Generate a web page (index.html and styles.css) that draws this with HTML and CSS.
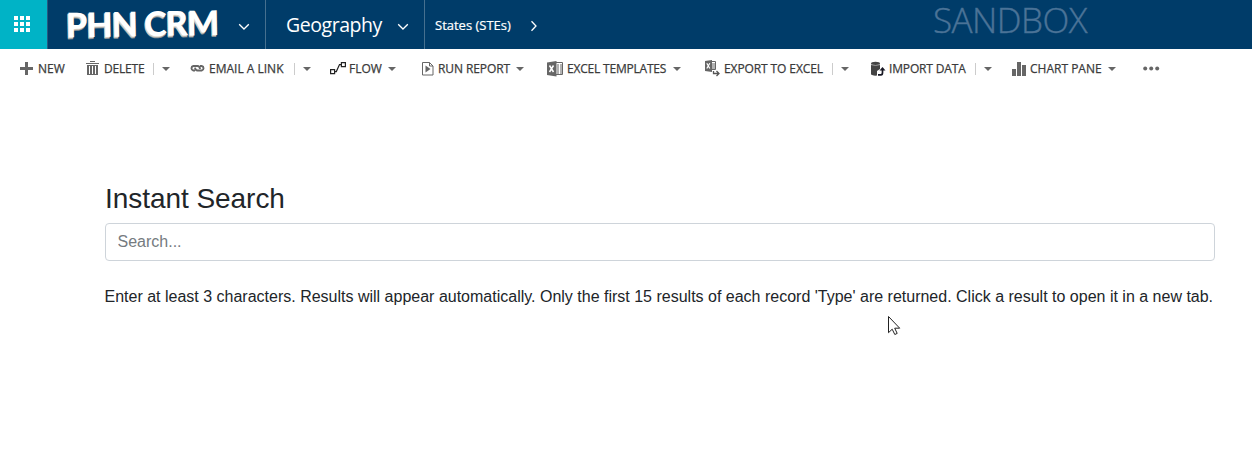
FILE: index.html
```html
<!DOCTYPE html>
<html lang="en">
<head>
<meta charset="utf-8">
<title>PHN CRM</title>
<link rel="stylesheet" href="styles.css">
</head>
<body>
<header class="nav">
  <div class="waffle"><svg width="16" height="16" fill="#fff"><path d="M0 0h4v4H0zM6 0h4v4H6zM12 0h4v4h-4zM0 6h4v4H0zM6 6h4v4H6zM12 6h4v4h-4zM0 12h4v4H0zM6 12h4v4H6zM12 12h4v4h-4z"/></svg></div>
  <div class="brand"><span class="brand-text">PHN CRM</span><svg class="chev" width="12" height="8"><path d="M1.2 1.2L6 6L10.8 1.2"/></svg></div>
  <div class="area"><span class="area-text">Geography</span><svg class="chev" width="12" height="8"><path d="M1.2 1.2L6 6L10.8 1.2"/></svg></div>
  <div class="entity"><span class="entity-text">States (STEs)</span><svg class="chev" width="8" height="12"><path d="M1.5 1.2L6 6L1.5 10.8"/></svg></div>
  <div class="env"><span class="env-text">SANDBOX</span></div>
</header>
<nav class="commands">
  <div class="cmd new"><svg class="icon" width="18" height="16"><path d="M5 1h3v5h5v3H8v5H5V9H0V6h5z"/></svg><span class="label">NEW</span></div>
  <div class="cmd delete"><svg class="icon" width="18" height="16"><path d="M4 0h5v1H4zM0 2h13v1H0zM1 4h11v10H1z"/><path d="M3.500 5v8M6.500 5v8M9.500 5v8" stroke="#fff"/></svg><span class="label">DELETE</span><i class="bar"></i><i class="caret"></i></div>
  <div class="cmd email"><svg class="icon" width="19" height="16"><g fill="none" stroke="#666" stroke-width="1.900"><path d="M5 9.500H3.300A2.300 2.300 0 0 1 3.300 5h4.200q2.300 0 2.500 3"/><path d="M10 5H11.700A2.300 2.300 0 0 1 11.700 9.500H7.500Q5.300 9.500 5 6.700"/></g></svg><span class="label">EMAIL A LINK</span><i class="bar"></i><i class="caret"></i></div>
  <div class="cmd flow"><svg class="icon" width="19" height="16"><g fill="none" stroke="#222" stroke-width="1.200"><path d="M.6 8.600h4v4h-4zM11.400 1.600h4v4h-4zM5 10.600h1.300L9.500 3.600h2"/></g></svg><span class="label">FLOW</span><i class="caret"></i></div>
  <div class="cmd report"><svg class="icon" width="16" height="16"><path fill="none" stroke="#666" d="M.5 1.500h7l3.500 3.500v9H.5zM7.500 1.500V5H11"/><path d="M3.500 4.500l5 3.500l-5 3.500z"/></svg><span class="label">RUN REPORT</span><i class="caret"></i></div>
  <div class="cmd templates"><svg class="icon" width="20" height="16"><path fill="none" stroke="#666" d="M9 1.500h6.500v12H9"/><path fill="none" stroke="#666" stroke-dasharray="2 1" d="M10 4h5M10 6h5M10 8h5M10 10h5M10 12h5"/><path d="M0 1.500L9.500 0v15.500L0 14z"/><path stroke="#fff" stroke-width="1.500" d="M2.500 4.500l4 6.500M6.500 4.500l-4 6.500"/></svg><span class="label">EXCEL TEMPLATES</span><i class="caret"></i></div>
  <div class="cmd export"><svg class="icon" width="19" height="17"><path fill="none" stroke="#666" d="M6 1.500h4.500v8H6M7 4h3M7 6h3M7 8h3"/><path fill="none" stroke="#555" stroke-width="1.300" d="M8.500 11v2.500h5M11.500 11l2.500 2.500l-2.500 2.500"/><path d="M0 1l7-1v12L0 11z"/><path stroke="#fff" stroke-width="1.200" d="M1.800 3.300l3 5.200M4.800 3.300L1.800 8.500"/></svg><span class="label">EXPORT TO EXCEL</span><i class="bar"></i><i class="caret"></i></div>
  <div class="cmd import"><svg class="icon" width="19" height="16"><path fill="#444" d="M1 3.500h9V8L7 10v4.500Q3 15 1 13.500z"/><ellipse cx="5.500" cy="2.500" rx="4.500" ry="1.700" fill="#444"/><path stroke="#bbb" fill="none" stroke-width=".7" d="M1 3.600q4.500 1.800 9 0"/><path fill="none" stroke="#181825" stroke-width="1.700" d="M8 13.800h3q1.500 0 1.500-2V8"/><path fill="#181825" d="M9.500 9.500L12.500 6l3 3.500z"/></svg><span class="label">IMPORT DATA</span><i class="bar"></i><i class="caret"></i></div>
  <div class="cmd chart"><svg class="icon" width="18" height="16"><path d="M0 8h4v7H0zM5 1h4v14H5zM10 4h4v11h-4z"/></svg><span class="label">CHART PANE</span><i class="caret"></i></div>
  <svg class="more" width="17" height="5"><circle cx="2.200" cy="2.500" r="2"/><circle cx="8.200" cy="2.500" r="2"/><circle cx="14.200" cy="2.500" r="2"/></svg>
</nav>
<main class="search">
  <h1 class="title">Instant Search</h1>
  <input class="field" type="text" placeholder="Search...">
  <p class="hint">Enter at least 3 characters. Results will appear automatically. Only the first 15 results of each record 'Type' are returned. Click a result to open it in a new tab.</p>
</main>
<svg class="pointer" width="13" height="20"><path d="M.5.5v16.200l3.700-3.500l2.600 5.300l2.400-1.100l-2.500-5.200h5z" fill="#fff" stroke="#222"/></svg>
</body>
</html>
```
FILE: styles.css
```css
* { box-sizing: border-box; }
body { margin: 0; height: 459px; overflow: hidden; background: #fff; font-family: "Open Sans", "Noto Sans", sans-serif; }
.nav { display: flex; height: 49px; background: #003c69; color: #fff; white-space: nowrap; }
.waffle { width: 47px; padding: 16px 0 0 14px; background: #00b3c6; flex: none; }
.waffle svg, .icon, .more, .chev { display: block; flex: none; }
.brand { display: flex; width: 219px; padding-left: 18px; border-left: 1px solid #275a80; border-right: 1px solid #46708f; flex: none; }
.brand-text { width: 172px; font: 900 34px/45px Lato, sans-serif; letter-spacing: -.9px; text-shadow: -1px 1px 0 #d8d0c4, -1px 2px 0 #8b9297; transform: rotate(-1deg); }
.chev { fill: none; stroke: #fff; stroke-width: 1.300; margin-top: 23px; }
.area { display: flex; width: 159px; padding-left: 20px; border-right: 1px solid #46708f; flex: none; }
.area-text { width: 111px; font-size: 19.500px; line-height: 49px; letter-spacing: -.45px; }
.entity { display: flex; width: 508px; padding-left: 10px; flex: none; }
.entity-text { width: 95px; font-size: 13px; line-height: 50px; -webkit-text-stroke: .2px #fff; }
.entity .chev { margin-top: 20px; }
.env-text { display: block; font-size: 35px; font-weight: 300; line-height: 40px; color: #4b7397; letter-spacing: -.5px; -webkit-text-stroke: .4px #4b7397; }
.commands { display: flex; height: 39px; padding-left: 20px; color: #3b3b3b; font-size: 12px; -webkit-text-stroke: .25px #3b3b3b; }
.cmd { display: flex; height: 39px; align-items: center; flex: none; white-space: nowrap; }
.icon { fill: #666; }
.label { line-height: 39px; flex: none; }
.new { width: 66px; }
.delete { width: 104px; }
.email { width: 140px; }
.flow { width: 92px; }
.report { width: 125px; }
.templates { width: 158px; }
.export { width: 165px; }
.import { width: 142px; }
.chart { width: 131px; }
.new .label { width: 28px; }
.delete .label { width: 49px; letter-spacing: -.2px; }
.email .label { width: 85px; }
.flow .label { width: 39px; }
.report .label { width: 78px; letter-spacing: -.1px; }
.templates .label { width: 106px; letter-spacing: -.2px; }
.export .label { width: 108px; letter-spacing: -.1px; }
.import .label { width: 86px; letter-spacing: -.15px; }
.chart .label { width: 78px; }
.bar { width: 1px; height: 12px; margin-right: 8px; background: #ccc; }
.caret { border: 4px solid transparent; border-top-color: #666; border-bottom: 0; }
.more { margin-top: 17px; fill: #666; }
.search { padding: 93px 0 0 105px; font-family: "Liberation Sans", Arial, sans-serif; color: #212529; }
.title { margin: 0; font-size: 28px; font-weight: 400; line-height: 36px; letter-spacing: -.05px; }
.field { display: block; width: 1110px; height: 38px; margin-top: 6px; padding: 0 11.500px; border: 1px solid #ced4da; border-radius: 4px; font: 16px "Liberation Sans", Arial, sans-serif; }
.field::placeholder { color: #757b80; }
.hint { margin: 24px 0 0 -.5px; font-size: 16px; line-height: 24px; white-space: nowrap; }
.pointer { position: absolute; left: 888px; top: 316px; }
```
